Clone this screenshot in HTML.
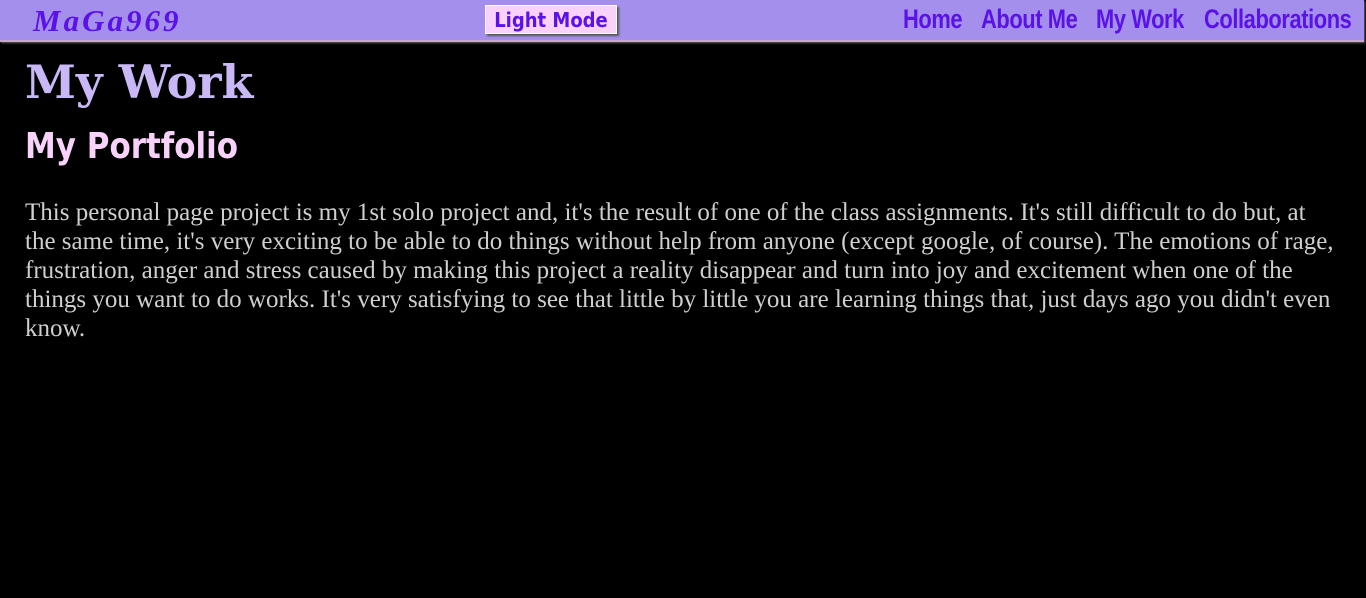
<!DOCTYPE html>
<html><head><style>
html,body{margin:0;padding:0;background:#000;width:1366px;height:598px;overflow:hidden}
header{position:absolute;left:0;top:0;width:1364px;height:40px;background:#a48fed;border-bottom:2px solid #c8a8c8;box-shadow:1px 1px 2px #666}
.logo{position:absolute;left:33px;top:3px;font:bold 31px "Liberation Serif",serif;color:#5b12e8;font-style:italic;letter-spacing:3px}
.btn{position:absolute;left:485px;top:5px;width:132px;height:29px;background:#f9d2fb;border:1px solid #fff;box-shadow:2px 2px 2px #555;font:bold 20px "DejaVu Sans Condensed","DejaVu Sans",sans-serif;color:#5b12e8;text-align:center;line-height:29px;box-sizing:border-box}
nav{position:absolute;top:4px;font:bold 27px "Liberation Sans Narrow","Liberation Sans",sans-serif;color:#5b12e8}
nav span{position:absolute;white-space:nowrap;transform-origin:left top;transform:scaleX(0.81);letter-spacing:-0.5px}
h1{position:absolute;left:25px;top:56px;margin:0;font:bold 46px "DejaVu Serif","Liberation Serif",serif;color:#c8b8f5;line-height:52px}
h2{position:absolute;left:25px;top:125px;margin:0;font:bold 36px "DejaVu Sans","Liberation Sans",sans-serif;color:#f9d2fb;line-height:44px;transform-origin:left top;transform:scaleX(0.86);white-space:nowrap}
p{position:absolute;left:25px;top:198px;width:1312px;margin:0;font:25px/29px "Liberation Serif",serif;color:#cfcfcf}
</style></head><body>
<header>
<div class="logo">MaGa969</div>
<div class="btn">Light Mode</div>
<nav>
<span style="left:903px">Home</span>
<span style="left:981px">About Me</span>
<span style="left:1096px">My Work</span>
<span style="left:1204px">Collaborations</span>
</nav>
</header>
<h1>My Work</h1>
<h2>My Portfolio</h2>
<p>This personal page project is my 1st solo project and, it's the result of one of the class assignments. It's still difficult to do but, at the same time, it's very exciting to be able to do things without help from anyone (except google, of course). The emotions of rage, frustration, anger and stress caused by making this project a reality disappear and turn into joy and excitement when one of the things you want to do works. It's very satisfying to see that little by little you are learning things that, just days ago you didn't even know.</p>
</body></html>
